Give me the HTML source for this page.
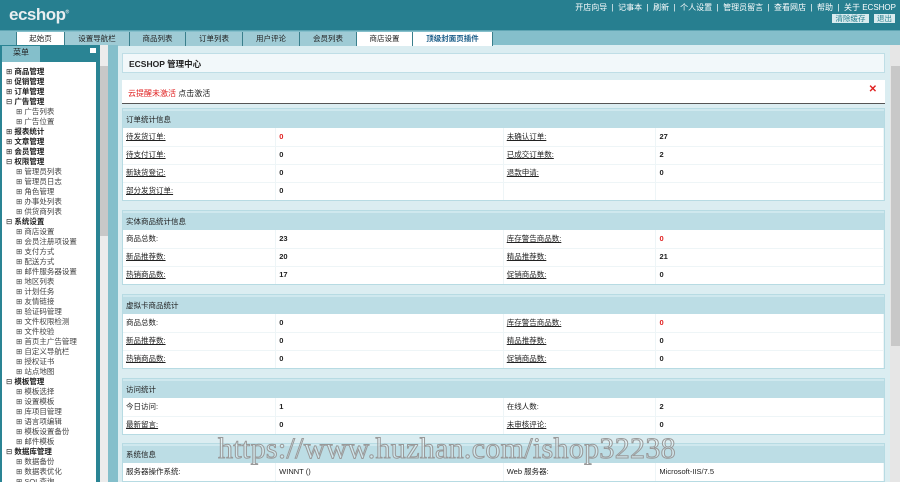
<!DOCTYPE html>
<html><head><meta charset="utf-8"><style>
*{margin:0;padding:0;box-sizing:border-box}
body{width:900px;height:482px;overflow:hidden;background:#dbedf1;font-family:"Liberation Sans","Noto Sans CJK SC",sans-serif;font-size:8px;color:#222;position:relative}
.hdr{position:absolute;left:0;top:0;width:900px;height:30px;background:#277f90}
.logo{position:absolute;left:9px;top:5px;color:#e8eef0;font:bold 17px "Liberation Sans",sans-serif;letter-spacing:-0.5px}
.links{position:absolute;right:4px;top:2px;color:#fff;font-size:8px;white-space:nowrap}
.btn{position:absolute;top:14px;height:9px;background:#d9ebef;color:#27808f;font-size:7.5px;line-height:9px;text-align:center}
.tabs{position:absolute;left:0;top:30px;width:900px;height:15px;background:#85bfcb;border-top:1px solid #5fa5b3}
.tab{position:absolute;top:1px;height:14px;line-height:13px;text-align:center;font-size:7.5px;color:#222;border-right:1px solid #3a7f8c;background:#9fcbd5}
.tab.w{background:#fff}
.side{position:absolute;left:0;top:45px;width:108px;height:437px;background:#2a8494}
.stab{position:absolute;left:2px;top:1px;width:38px;height:16px;background:#84bfcb;text-align:center;line-height:14px;font-size:8px}
.list{position:absolute;left:2px;top:17px;width:94px;height:420px;background:#fff;padding:5px 0 0 4px;line-height:10px;font-size:7.5px;overflow:hidden;white-space:nowrap}
.list .s{padding-left:10px;color:#444}
.list b{font-weight:bold}
.sb{position:absolute;left:100px;top:45px;width:8px;height:437px;background:#ececec}
.sbt{position:absolute;left:100px;top:66px;width:8px;height:170px;background:#c8c8c8}
.split{position:absolute;left:108px;top:45px;width:10px;height:437px;background:#84bfcb}
.rsb{position:absolute;left:890px;top:45px;width:10px;height:437px;background:#e6e6e6}
.rsbt{position:absolute;left:891px;top:66px;width:9px;height:280px;background:#c8c8c8}
.box{position:absolute;left:122px;width:763px;background:#fff;border:1px solid #bfdee6}
.title{top:53px;height:20px;background:#f2f8fa;font-weight:bold;font-size:8.5px;padding:6px 6px;line-height:8px}
.alert{top:80px;height:24px;border:none;border-bottom:1px solid #555;padding:8px 6px;font-size:8px}
.sec{position:absolute;left:122px;width:763px;border:1px solid #b7dbe3;background:#fff}
.sec .h{height:19px;background:#bcdde5;line-height:17px;padding-left:3px;font-size:7.5px;border-top:2px solid #cfe8ee}
.sec table{border-collapse:collapse;width:100%}
.sec td{height:18px;font-size:7.5px;border-bottom:1px solid #eef5f7;border-right:1px solid #eef5f7;padding:0 0 0 3px;line-height:16px}
.sec tr:last-child td{border-bottom:none}
.sec td.a{width:153px}.sec td.b{width:228px;font-weight:bold}.sec td.c{width:153px}
u{text-decoration:underline}
.r{color:#e02020}
.wm{position:absolute;left:218px;top:432px;font:30px "Liberation Serif",serif;color:rgba(255,255,255,0.3);-webkit-text-stroke:1px #999;white-space:nowrap;letter-spacing:0.3px}
</style></head><body>
<div class="hdr"><div class="logo">ecshop<sup style="font-size:5px">®</sup></div>
<div class="links">开店向导 &nbsp;|&nbsp; 记事本 &nbsp;|&nbsp; 刷新 &nbsp;|&nbsp; 个人设置 &nbsp;|&nbsp; 管理员留言 &nbsp;|&nbsp; 查看网店 &nbsp;|&nbsp; 帮助 &nbsp;|&nbsp; 关于 ECSHOP</div>
<div class="btn" style="left:832px;width:37px">清除缓存</div><div class="btn" style="left:874px;width:21px">退出</div></div>
<div class="tabs">
<div class="tab" style="left:0;width:17px;background:#85bfcb"></div>
<div class="tab w" style="left:17px;width:48px">起始页</div>
<div class="tab" style="left:65px;width:65px">设置导航栏</div>
<div class="tab" style="left:130px;width:56px">商品列表</div>
<div class="tab" style="left:186px;width:57px">订单列表</div>
<div class="tab" style="left:243px;width:57px">用户评论</div>
<div class="tab" style="left:300px;width:57px">会员列表</div>
<div class="tab w" style="left:357px;width:56px">商店设置</div>
<div class="tab w" style="left:413px;width:80px;color:#1d5f8a;font-weight:bold">顶级封面页插件</div>
</div>
<div class="side"><div class="stab">菜单</div><div style="position:absolute;left:90px;top:3px;width:6px;height:5px;background:#fff"></div>
<div class="list">
⊞ <b>商品管理</b><br>⊞ <b>促销管理</b><br>⊞ <b>订单管理</b><br>⊟ <b>广告管理</b><br>
<div class="s">⊞ 广告列表<br>⊞ 广告位置</div>
⊞ <b>报表统计</b><br>⊞ <b>文章管理</b><br>⊞ <b>会员管理</b><br>⊟ <b>权限管理</b><br>
<div class="s">⊞ 管理员列表<br>⊞ 管理员日志<br>⊞ 角色管理<br>⊞ 办事处列表<br>⊞ 供货商列表</div>
⊟ <b>系统设置</b><br>
<div class="s">⊞ 商店设置<br>⊞ 会员注册项设置<br>⊞ 支付方式<br>⊞ 配送方式<br>⊞ 邮件服务器设置<br>⊞ 地区列表<br>⊞ 计划任务<br>⊞ 友情链接<br>⊞ 验证码管理<br>⊞ 文件权限检测<br>⊞ 文件校验<br>⊞ 首页主广告管理<br>⊞ 自定义导航栏<br>⊞ 授权证书<br>⊞ 站点地图</div>
⊟ <b>模板管理</b><br>
<div class="s">⊞ 模板选择<br>⊞ 设置模板<br>⊞ 库项目管理<br>⊞ 语言项编辑<br>⊞ 模板设置备份<br>⊞ 邮件模板</div>
⊟ <b>数据库管理</b><br>
<div class="s">⊞ 数据备份<br>⊞ 数据表优化<br>⊞ SQL查询</div>
</div></div>
<div class="sb"></div><div class="sbt"></div>
<div class="split"></div>
<div class="rsb"></div><div class="rsbt"></div>
<div class="box title">ECSHOP 管理中心</div>
<div class="box alert"><span class="r">云提醒未激活</span> 点击激活<span class="r" style="position:absolute;right:8px;top:4px;font-weight:bold;font-size:10px">✕</span></div>

<div class="sec" style="top:108px"><div class="h">订单统计信息</div><table>
<tr><td class="a"><u>待发货订单:</u></td><td class="b r">0</td><td class="c"><u>未确认订单:</u></td><td class="b">27</td></tr>
<tr><td class="a"><u>待支付订单:</u></td><td class="b">0</td><td class="c"><u>已成交订单数:</u></td><td class="b">2</td></tr>
<tr><td class="a"><u>新缺货登记:</u></td><td class="b">0</td><td class="c"><u>退款申请:</u></td><td class="b">0</td></tr>
<tr><td class="a"><u>部分发货订单:</u></td><td class="b">0</td><td class="c"></td><td class="b"></td></tr></table></div>

<div class="sec" style="top:210px"><div class="h">实体商品统计信息</div><table>
<tr><td class="a">商品总数:</td><td class="b">23</td><td class="c"><u>库存警告商品数:</u></td><td class="b r">0</td></tr>
<tr><td class="a"><u>新品推荐数:</u></td><td class="b">20</td><td class="c"><u>精品推荐数:</u></td><td class="b">21</td></tr>
<tr><td class="a"><u>热销商品数:</u></td><td class="b">17</td><td class="c"><u>促销商品数:</u></td><td class="b">0</td></tr></table></div>

<div class="sec" style="top:294px"><div class="h">虚拟卡商品统计</div><table>
<tr><td class="a">商品总数:</td><td class="b">0</td><td class="c"><u>库存警告商品数:</u></td><td class="b r">0</td></tr>
<tr><td class="a"><u>新品推荐数:</u></td><td class="b">0</td><td class="c"><u>精品推荐数:</u></td><td class="b">0</td></tr>
<tr><td class="a"><u>热销商品数:</u></td><td class="b">0</td><td class="c"><u>促销商品数:</u></td><td class="b">0</td></tr></table></div>

<div class="sec" style="top:378px"><div class="h">访问统计</div><table>
<tr><td class="a">今日访问:</td><td class="b">1</td><td class="c">在线人数:</td><td class="b">2</td></tr>
<tr><td class="a"><u>最新留言:</u></td><td class="b">0</td><td class="c"><u>未审核评论:</u></td><td class="b">0</td></tr></table></div>

<div class="sec" style="top:443px"><div class="h">系统信息</div><table>
<tr><td class="a">服务器操作系统:</td><td class="b" style="font-weight:normal">WINNT ()</td><td class="c">Web 服务器:</td><td class="b" style="font-weight:normal">Microsoft-IIS/7.5</td></tr></table></div>

<div class="wm">https://www.huzhan.com/ishop32238</div>
</body></html>
